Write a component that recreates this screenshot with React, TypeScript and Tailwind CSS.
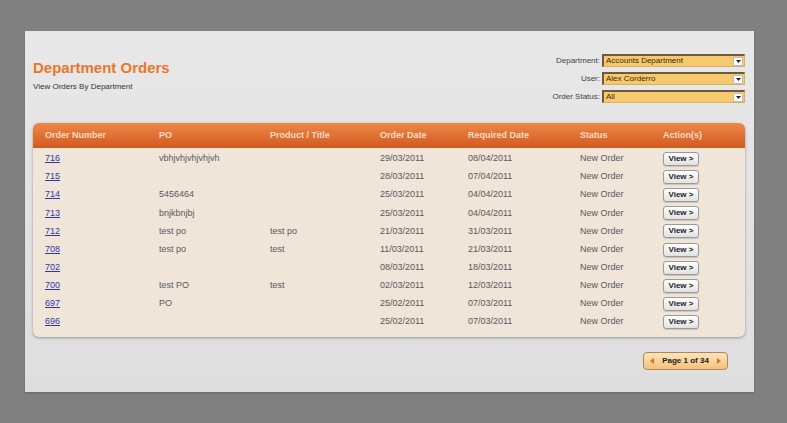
import React from "react";

type Order = {
	num: string;
	po: string;
	title: string;
	ordered: string;
	required: string;
	status: string;
};

const orders: Order[] = [
	{ num: "716", po: "vbhjvhjvhjvhjvh", title: "", ordered: "29/03/2011", required: "08/04/2011", status: "New Order" },
	{ num: "715", po: "", title: "", ordered: "28/03/2011", required: "07/04/2011", status: "New Order" },
	{ num: "714", po: "5456464", title: "", ordered: "25/03/2011", required: "04/04/2011", status: "New Order" },
	{ num: "713", po: "bnjkbnjbj", title: "", ordered: "25/03/2011", required: "04/04/2011", status: "New Order" },
	{ num: "712", po: "test po", title: "test po", ordered: "21/03/2011", required: "31/03/2011", status: "New Order" },
	{ num: "708", po: "test po", title: "test", ordered: "11/03/2011", required: "21/03/2011", status: "New Order" },
	{ num: "702", po: "", title: "", ordered: "08/03/2011", required: "18/03/2011", status: "New Order" },
	{ num: "700", po: "test PO", title: "test", ordered: "02/03/2011", required: "12/03/2011", status: "New Order" },
	{ num: "697", po: "PO", title: "", ordered: "25/02/2011", required: "07/03/2011", status: "New Order" },
	{ num: "696", po: "", title: "", ordered: "25/02/2011", required: "07/03/2011", status: "New Order" },
];

const cols = "grid grid-cols-[114px_111px_110px_88px_112px_83px_1fr] pl-[12px] items-center";

function FilterSelect({ label, value }: { label: string; value: string }) {
	return (
		<div className="flex items-center justify-end gap-[2px]">
			<span className="text-[8px] text-[#444]">{label}</span>
			<div className="flex h-[13px] w-[143px] items-center justify-between border-t-2 border-l-2 border-t-[#6e5a3a] border-l-[#6e5a3a] border-b border-r border-b-[#d9b060] border-r-[#d9b060] bg-[#f7c96c] pl-[2px] pr-[1px]">
				<span className="text-[8px] leading-none text-[#3a2a10]">{value}</span>
				<div className="flex h-[9px] w-[10px] items-center justify-center rounded-[1px] border border-[#bbb] bg-white">
					<svg width="5" height="3" viewBox="0 0 5 3">
						<path d="M0 0h5L2.5 3z" fill="#222" />
					</svg>
				</div>
			</div>
		</div>
	);
}

export default function App() {
	return (
		<div
			className="h-[423px] w-[787px] bg-[#808080] pl-[25px] pt-[31px]"
			style={{ fontFamily: '"Liberation Sans", Arial, sans-serif' }}
		>
			<div className="h-[361px] w-[729px] bg-gradient-to-b from-[#e8e8e8] to-[#dedede] pl-[8px] pr-[9px] shadow-[0_1px_2px_rgba(0,0,0,0.2)]">
				<div className="flex items-start justify-between pt-[23px]">
					<div className="mt-[5px]">
						<h1 className="text-[15px] font-bold leading-[18px] text-[#e8772e]">
							Department Orders
						</h1>
						<p className="mt-[4px] text-[8px] text-[#333]">View Orders By Department</p>
					</div>
					<div className="flex flex-col gap-[5px]">
						<FilterSelect label="Department:" value="Accounts Department" />
						<FilterSelect label="User:" value="Alex Corderro" />
						<FilterSelect label="Order Status:" value="All" />
					</div>
				</div>

				<div className="mt-[20px] w-[712px] rounded-[6px] bg-[#efe5d8] pb-[6px] shadow-[0_1px_3px_rgba(0,0,0,0.35)]">
					<div className={`${cols} h-[25px] rounded-t-[6px] bg-gradient-to-b from-[#ee8748] to-[#d05a1e] text-[9px] font-bold text-[#f8dcc4]`}>
						<span>Order Number</span>
						<span>PO</span>
						<span>Product / Title</span>
						<span>Order Date</span>
						<span>Required Date</span>
						<span>Status</span>
						<span>Action(s)</span>
					</div>
					<div className="pt-[2px]">
						{orders.map((o) => (
							<div key={o.num} className={`${cols} h-[18.1px] text-[9px] text-[#5a5a5a]`}>
								<a href="#" className="text-[#3535b0] underline">
									{o.num}
								</a>
								<span>{o.po}</span>
								<span>{o.title}</span>
								<span>{o.ordered}</span>
								<span>{o.required}</span>
								<span>{o.status}</span>
								<span>
									<button className="flex h-[14px] w-[36px] items-center justify-center rounded-[3px] border border-[#9a9a9a] bg-gradient-to-b from-white to-[#e2e2e2] text-[8px] font-bold text-[#222] shadow-[0_1px_1px_rgba(0,0,0,0.15)]">
										View &gt;
									</button>
								</span>
							</div>
						))}
					</div>
				</div>

				<div className="mt-[15px] flex justify-end pr-[17px]">
					<div className="flex h-[18px] w-[85px] items-center justify-between rounded-[4px] border border-[#a88a5a] bg-gradient-to-b from-[#fde3b8] to-[#f6c07c] px-[6px]">
						<svg width="4" height="6" viewBox="0 0 4 6">
							<path d="M4 0v6L0 3z" fill="#e07020" />
						</svg>
						<span className="text-[8px] font-bold text-[#222]">Page 1 of 34</span>
						<svg width="4" height="6" viewBox="0 0 4 6">
							<path d="M0 0v6l4-3z" fill="#e07020" />
						</svg>
					</div>
				</div>
			</div>
		</div>
	);
}
